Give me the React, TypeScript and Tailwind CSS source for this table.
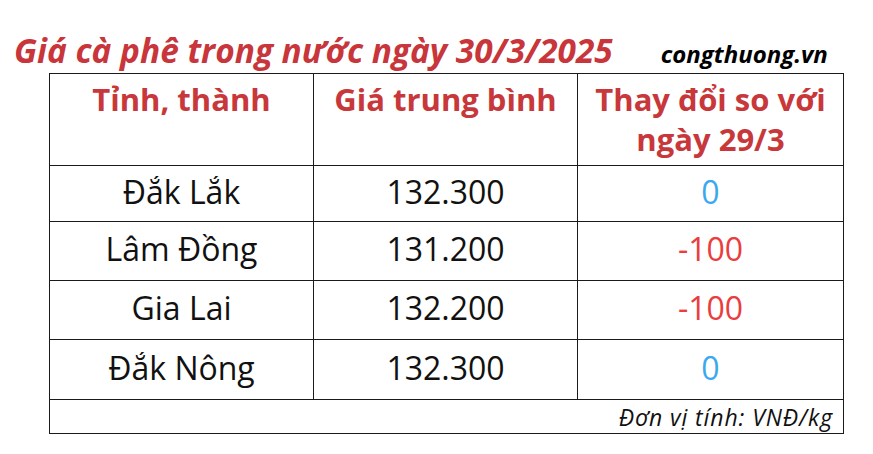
import React from 'react';

const rows = [
  { name: 'Đắk Lắk', price: '132.300', diff: '0' },
  { name: 'Lâm Đồng', price: '131.200', diff: '-100' },
  { name: 'Gia Lai', price: '132.200', diff: '-100' },
  { name: 'Đắk Nông', price: '132.300', diff: '0' },
];

const rowHeights = ['h-[56px]', 'h-[59px]', 'h-[59px]', 'h-[60px]'];

const App: React.FC = () => {
  return (
    <div className="w-[873px] h-[454px] bg-white font-['Open_Sans',sans-serif] overflow-hidden">
      {/* Title */}
      <div className="flex items-baseline h-[73px] pt-[30px] pl-[14px]">
        <h1 className="text-[33.4px] leading-[40px] font-bold italic text-[#c8353a]">
          Giá cà phê trong nước ngày 30/3/2025
        </h1>
        <span className="ml-[48px] text-[24px] leading-[40px] font-bold italic text-black">congthuong.vn</span>
      </div>

      {/* Table */}
      <div className="ml-[49px] w-[795px] border border-[#1a1a1a]">
        <div className="grid grid-cols-[264px_264px_265px] h-[92px] border-b border-[#1a1a1a] text-[#c8383b] font-bold text-[31px] leading-[40px] text-center">
          <div className="border-r border-[#1a1a1a] pt-[5px]">Tỉnh, thành</div>
          <div className="border-r border-[#1a1a1a] pt-[5px]">Giá trung bình</div>
          <div className="pt-[5px]">
            Thay đổi so với
            <br />
            ngày 29/3
          </div>
        </div>

        {rows.map((r, i) => (
          <div
            key={i}
            className={`grid grid-cols-[264px_264px_265px] ${rowHeights[i]} border-b border-[#1a1a1a] text-[32px] text-center`}
          >
            <div className="border-r border-[#1a1a1a] flex items-center justify-center pb-[4px] text-[#111]">{r.name}</div>
            <div className="border-r border-[#1a1a1a] flex items-center justify-center pb-[4px] text-[#111]">{r.price}</div>
            <div
              className={`flex items-center justify-center pb-[4px] ${r.diff === '0' ? 'text-[#3aa9ef]' : 'text-[#ea3d3d]'}`}
            >
              {r.diff}
            </div>
          </div>
        ))}

        <div className="h-[33px] flex items-center justify-end pr-[10px]">
          <span className="text-[23px] leading-[30px] italic text-[#111] tracking-[0.9px]">Đơn vị tính: VNĐ/kg</span>
        </div>
      </div>
    </div>
  );
};

export default App;
